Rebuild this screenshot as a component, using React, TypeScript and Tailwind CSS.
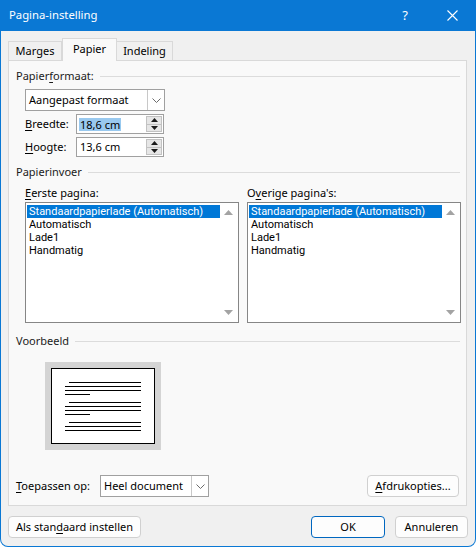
import React from 'react'

const FONT = "font-['Noto_Sans',_'Open_Sans',_sans-serif]"

function Chevron() {
  return (
    <svg width="9" height="5" viewBox="0 0 9 5" className="block">
      <polyline points="0.5,0.5 4.5,4.5 8.5,0.5" fill="none" stroke="#6b6b6b" strokeWidth="1" />
    </svg>
  )
}

function GroupHeader({ children }: { children: React.ReactNode }) {
  return (
    <div className="flex items-center h-[14px] pl-[7px] pr-[6px]">
      <span className="whitespace-nowrap text-[#1b1b1b]">{children}</span>
      <div className="flex-1 h-px bg-[#dcdcdc] ml-[6px]" />
    </div>
  )
}

function Select({ value, width }: { value: string; width: string }) {
  return (
    <div className={`${width} h-[22px] flex border border-[#a0a0a0] bg-white`}>
      <div className="flex-1 pl-[3px] flex items-center whitespace-nowrap">{value}</div>
      <div className="w-[17px] border-l border-[#c8c8c8] flex items-center justify-center">
        <Chevron />
      </div>
    </div>
  )
}

function Spin({ value, selected }: { value: string; selected?: boolean }) {
  return (
    <div className="w-[88px] h-[20px] flex border border-[#a0a0a0] bg-white">
      <div className="flex-1 pl-[2px] flex items-center">
        <span className={selected ? 'bg-[#99c9ef] px-px leading-[13px]' : 'px-px'}>{value}</span>
      </div>
      <div className="w-[16px] my-px mr-px flex flex-col border border-[#c2c2c2] bg-[#e6e6e6]">
        <div className="flex-1 flex items-center justify-center border-b border-[#c2c2c2]">
          <svg width="7" height="4" viewBox="0 0 7 4"><polygon points="3.5,0 7,4 0,4" fill="#1a1a1a" /></svg>
        </div>
        <div className="flex-1 flex items-center justify-center">
          <svg width="7" height="4" viewBox="0 0 7 4"><polygon points="0,0 7,0 3.5,4" fill="#1a1a1a" /></svg>
        </div>
      </div>
    </div>
  )
}

function ListBox({ items }: { items: string[] }) {
  return (
    <div className="w-[214px] h-[121px] flex border border-[#868686] bg-white p-px">
      <div className="flex-1 flex flex-col pt-px font-['Roboto',_'Noto_Sans',_sans-serif] text-[11px]">
        {items.map((it, i) => (
          <div
            key={it}
            className={`h-[13px] leading-[13px] pl-[2px] whitespace-nowrap ${i === 0 ? 'bg-[#0078d7] text-white' : 'text-black'}`}
          >
            {it}
          </div>
        ))}
      </div>
      <div className="w-[17px] flex flex-col justify-between items-center py-[6px]">
        <svg width="9" height="5" viewBox="0 0 9 5"><polygon points="4.5,0 9,5 0,5" fill="#a3a3a3" /></svg>
        <svg width="9" height="5" viewBox="0 0 9 5"><polygon points="0,0 9,0 4.5,5" fill="#a3a3a3" /></svg>
      </div>
    </div>
  )
}

const PREVIEW_LINES = [
  'mt-[13px] ml-[17px] w-[72px]',
  'mt-[3px] ml-[13px] w-[76px]',
  'mt-[3px] ml-[13px] w-[76px]',
  'mt-[3px] ml-[13px] w-[25px]',
  'mt-[7px] ml-[17px] w-[72px]',
  'mt-[3px] ml-[13px] w-[76px]',
  'mt-[3px] ml-[13px] w-[76px]',
  'mt-[3px] ml-[13px] w-[25px]',
  'mt-[7px] ml-[17px] w-[72px]',
  'mt-[3px] ml-[13px] w-[76px]',
  'mt-[3px] ml-[13px] w-[76px]',
]

function Button({ children, width, primary }: { children: React.ReactNode; width: string; primary?: boolean }) {
  return (
    <div
      className={`${width} h-[22px] flex items-center justify-center rounded-[4px] border bg-[#fdfdfd] ${
        primary ? 'border-[#0067c0]' : 'border-[#d0d0d0]'
      }`}
    >
      {children}
    </div>
  )
}

const U = ({ children }: { children: React.ReactNode }) => (
  <span className="underline underline-offset-[2px] decoration-1">{children}</span>
)

const TRAYS = ['Standaardpapierlade (Automatisch)', 'Automatisch', 'Lade1', 'Handmatig']

export default function App() {
  return (
    <div className={`${FONT} text-[11px] text-black w-[476px] h-[547px] bg-[#0a78d4] rounded-b-[8px] flex flex-col px-px pb-px`}>
      {/* Title bar */}
      <div className="h-[31px] flex items-center text-white text-[11.3px] pl-[8px]">
        <span className="flex-1">Pagina-instelling</span>
        <span className="w-[20px] text-center mr-[32px] text-[13px]">?</span>
        <svg width="11" height="11" viewBox="0 0 11 11" className="mr-[17px]">
          <path d="M0.5 0.5 L10.5 10.5 M10.5 0.5 L0.5 10.5" stroke="white" strokeWidth="1.1" />
        </svg>
      </div>

      <div className="flex-1 bg-[#f0f0f0] rounded-b-[7px] pl-[7px] flex flex-col">
        {/* Tabs */}
        <div className="mt-[7px] h-[22px] flex items-end">
          <div className="w-[54px] h-[19px] border border-b-0 border-[#d9d9d9] bg-[#f0f0f0] flex items-center justify-center">
            Marges
          </div>
          <div className="w-[55px] h-[23px] -mb-px relative z-10 border border-b-0 border-[#d9d9d9] bg-[#f9f9f9] flex items-center justify-center pb-[2px]">
            Papier
          </div>
          <div className="w-[56px] h-[19px] border border-b-0 border-l-0 border-[#d9d9d9] bg-[#f0f0f0] flex items-center justify-center">
            Indeling
          </div>
        </div>

        {/* Panel */}
        <div className="w-[459px] h-[446px] border border-[#d9d9d9] bg-[#f9f9f9] flex flex-col">
          <div className="mt-[8px]">
            <GroupHeader>
              Papier<U>f</U>ormaat:
            </GroupHeader>
          </div>
          <div className="mt-[6px] ml-[16px]">
            <Select value="Aangepast formaat" width="w-[140px]" />
          </div>
          <div className="mt-[3px] ml-[16px] flex items-center">
            <span className="w-[51px]">
              <U>B</U>reedte:
            </span>
            <Spin value="18,6 cm" selected />
          </div>
          <div className="mt-[3px] ml-[16px] flex items-center">
            <span className="w-[51px]">
              <U>H</U>oogte:
            </span>
            <Spin value="13,6 cm" />
          </div>

          <div className="mt-[8px]">
            <GroupHeader>Papierinvoer</GroupHeader>
          </div>
          <div className="mt-[7px] ml-[16px] flex gap-[8px]">
            <div className="flex flex-col">
              <div className="h-[14px] flex items-center">
                <U>E</U>erste pagina:
              </div>
              <div className="mt-[2px]">
                <ListBox items={TRAYS} />
              </div>
            </div>
            <div className="flex flex-col">
              <div className="h-[14px] flex items-center">
                O<U>v</U>erige pagina's:
              </div>
              <div className="mt-[2px]">
                <ListBox items={TRAYS} />
              </div>
            </div>
          </div>

          <div className="mt-[11px]">
            <GroupHeader>Voorbeeld</GroupHeader>
          </div>
          <div className="mt-[14px] ml-[36px] w-[116px] h-[88px] bg-[#d4d4d4] flex items-center justify-center">
            <div className="w-[104px] h-[76px] bg-white border border-black flex flex-col">
              {PREVIEW_LINES.map((c, i) => (
                <div key={i} className={`${c} h-px bg-black`} />
              ))}
            </div>
          </div>

          <div className="mt-[25px] flex items-center pl-[7px] pr-[7px]">
            <span className="w-[84px]">
              <U>T</U>oepassen op:
            </span>
            <Select value="Heel document" width="w-[109px]" />
            <div className="flex-1" />
            <Button width="w-[92px]">
              <U>A</U>fdrukopties...
            </Button>
          </div>
        </div>

        {/* Bottom buttons */}
        <div className="mt-[10px] flex items-center pr-[7px]">
          <Button width="w-[133px]">
            Als stan<U>d</U>aard instellen
          </Button>
          <div className="flex-1" />
          <Button width="w-[74px]" primary>
            OK
          </Button>
          <div className="w-[10px]" />
          <Button width="w-[73px]">Annuleren</Button>
        </div>
      </div>
    </div>
  )
}
